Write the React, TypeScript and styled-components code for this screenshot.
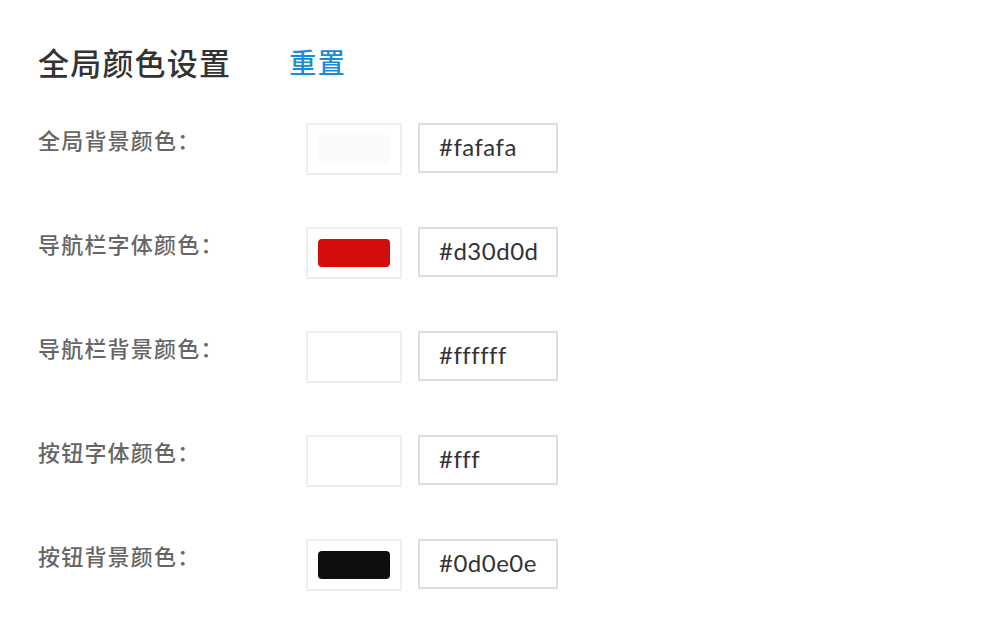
import React from 'react'
import styled, { createGlobalStyle } from 'styled-components'

const GlobalStyle = createGlobalStyle`
  html, body {
    margin: 0;
    padding: 0;
    background: #ffffff;
  }
  body {
    font-family: "Noto Sans CJK SC", "Noto Sans", sans-serif;
  }
`

type ColorItem = {
  label: string
  value: string
}

const items: ColorItem[] = [
  { label: '全局背景颜色：', value: '#fafafa' },
  { label: '导航栏字体颜色：', value: '#d30d0d' },
  { label: '导航栏背景颜色：', value: '#ffffff' },
  { label: '按钮字体颜色：', value: '#fff' },
  { label: '按钮背景颜色：', value: '#0d0e0e' },
]

const App = () => {
  return (
    <>
      <GlobalStyle />
      <Page>
        <Header>
          <Title>全局颜色设置</Title>
          <Reset>重置</Reset>
        </Header>
        <List>
          {items.map((item) => (
            <Row key={item.label}>
              <Label>{item.label}</Label>
              <Swatch>
                <SwatchFill $color={item.value} />
              </Swatch>
              <HexInput defaultValue={item.value} />
            </Row>
          ))}
        </List>
      </Page>
    </>
  )
}

export default App

const Page = styled.div`
  padding: 42px 0 0 38px;
`

const Header = styled.div`
  display: flex;
  align-items: center;
  height: 40px;
`

const Title = styled.div`
  font-size: 31px;
  font-weight: 500;
  letter-spacing: 1.2px;
  color: #333333;
  line-height: 40px;
`

const Reset = styled.a`
  margin-left: 58px;
  font-size: 27px;
  font-weight: 500;
  letter-spacing: 1.5px;
  color: #1a8cd8;
  cursor: pointer;
  line-height: 40px;
`

const List = styled.div`
  display: flex;
  flex-direction: column;
  gap: 52px;
  margin-top: 41px;
`

const Row = styled.div`
  display: flex;
  align-items: flex-start;
  height: 52px;
`

const Label = styled.div`
  width: 268px;
  font-size: 22px;
  font-weight: 500;
  letter-spacing: 1.2px;
  line-height: 32px;
  color: #666666;
`

const Swatch = styled.div`
  box-sizing: border-box;
  width: 96px;
  height: 52px;
  padding: 10px;
  border: 2px solid #eeeeee;
`

const SwatchFill = styled.div<{ $color: string }>`
  width: 100%;
  height: 100%;
  border-radius: 4px;
  background: ${(p) => p.$color};
`

const HexInput = styled.input`
  box-sizing: border-box;
  width: 140px;
  height: 50px;
  margin-left: 16px;
  padding: 0 0 3px 19px;
  border: 2px solid #dddddd;
  outline: none;
  font-family: "Lato", "Liberation Sans", sans-serif;
  font-size: 24px;
  font-weight: 400;
  letter-spacing: 0.5px;
  color: #333333;
  background: #ffffff;
`
